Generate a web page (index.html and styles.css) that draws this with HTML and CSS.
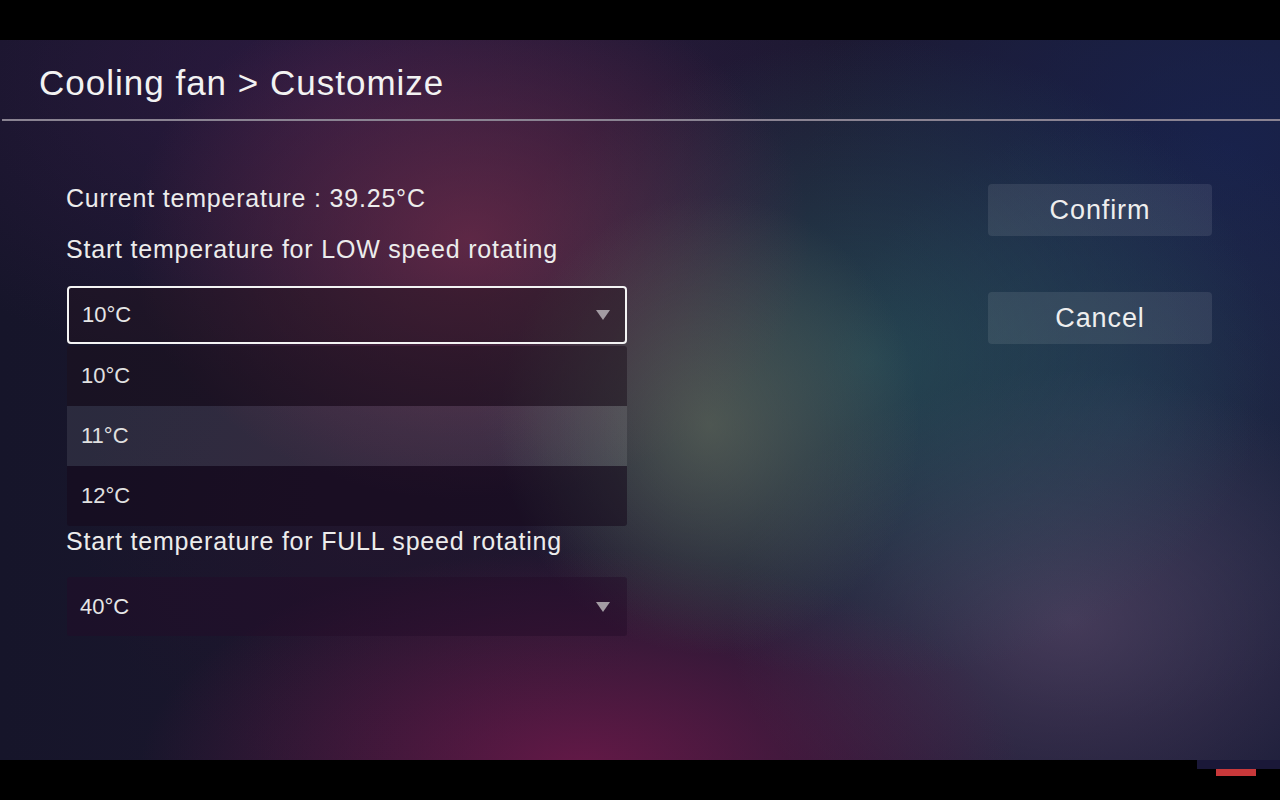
FILE: index.html
```html
<!DOCTYPE html>
<html>
<head>
<meta charset="utf-8">
<link rel="stylesheet" href="styles.css">
</head>
<body>
<div class="frame">
  <div class="screen">
    <header class="header">
      <h1 class="title">Cooling fan &gt; Customize</h1>
    </header>
    <main class="main">
      <section class="form">
        <p class="line current">Current temperature : 39.25°C</p>
        <p class="line label">Start temperature for LOW speed rotating</p>
        <div class="select focused">
          <span>10°C</span>
          <svg class="arrow" width="14" height="10" viewBox="0 0 14 10"><path d="M0 0H14L7 10Z" fill="#a39ca3"/></svg>
        </div>
        <ul class="options">
          <li class="opt">10°C</li>
          <li class="opt hover">11°C</li>
          <li class="opt last">12°C</li>
        </ul>
        <p class="line label label2">Start temperature for FULL speed rotating</p>
        <div class="select plain">
          <span>40°C</span>
          <svg class="arrow" width="14" height="10" viewBox="0 0 14 10"><path d="M0 0H14L7 10Z" fill="#a39ca3"/></svg>
        </div>
      </section>
      <aside class="actions">
        <button class="btn">Confirm</button>
        <button class="btn">Cancel</button>
      </aside>
    </main>
  </div>
  <div class="overlay-tab"></div>
  <div class="overlay-red"></div>
</div>
</body>
</html>
```

FILE: styles.css
```css
* { box-sizing: border-box; }
html, body { margin: 0; padding: 0; background: #000; }
body { font-family: "Liberation Sans", Arial, sans-serif; color: #ececec; }

.frame {
  position: relative;
  width: 1280px;
  height: 800px;
  padding-top: 40px;
  background: #000;
}

.screen {
  width: 1280px;
  height: 720px;
  overflow: hidden;
  background:
    radial-gradient(ellipse 210px 230px at 710px 385px, rgba(105,110,92,0.62), rgba(105,110,92,0) 100%),
    radial-gradient(ellipse 340px 260px at 470px 200px, rgba(118,46,76,0.70), rgba(118,46,76,0) 100%),
    radial-gradient(ellipse 400px 320px at 870px 320px, rgba(42,96,100,0.60), rgba(42,96,100,0) 100%),
    radial-gradient(ellipse 440px 220px at 580px 730px, rgba(112,25,75,0.85), rgba(112,25,75,0) 100%),
    radial-gradient(ellipse 340px 250px at 1070px 580px, rgba(86,70,102,0.70), rgba(86,70,102,0) 100%),
    radial-gradient(ellipse 300px 300px at 1120px 380px, rgba(38,62,88,0.55), rgba(38,62,88,0) 100%),
    radial-gradient(ellipse 420px 320px at 1230px 110px, rgba(24,36,82,0.75), rgba(24,36,82,0) 100%),
    radial-gradient(ellipse 520px 300px at 330px 40px, rgba(58,28,78,0.55), rgba(58,28,78,0) 100%),
    radial-gradient(ellipse 300px 260px at 380px 480px, rgba(40,20,45,0.5), rgba(40,20,45,0) 100%),
    linear-gradient(90deg, #16152a 0%, #1e1830 50%, #1a1c38 100%);
}

.header {
  height: 81px;
  padding-left: 37px;
  display: flex;
  align-items: center;
  border-bottom: 2px solid #8a8392;
  margin-left: 2px;
}
.title {
  margin: 6px 0 0 0;
  font-weight: 400;
  font-size: 35px;
  letter-spacing: 1px;
  color: #f2f2f2;
}

.main {
  display: flex;
  justify-content: space-between;
  padding: 62px 68px 0 66px;
}

.form { width: 561px; }

.line {
  margin: 0;
  font-size: 25px;
  letter-spacing: 0.8px;
  line-height: 30px;
  height: 30px;
  white-space: nowrap;
  color: #ececec;
}
.label { margin-top: 21px; }
.label2 { margin-top: 0; }

.select {
  margin-left: 1px;
  width: 560px;
  height: 58px;
  display: flex;
  align-items: center;
  justify-content: space-between;
  padding: 0 15px 0 13px;
  font-size: 22px;
  color: #e6e6e6;
  border-radius: 4px;
}
.select.focused {
  margin-top: 22px;
  border: 2px solid #f4f4f4;
  background: rgba(35,20,30,0.45);
}
.select.plain {
  margin-top: 21px;
  height: 59px;
  padding-left: 13px;
  padding-right: 17px;
  background: rgba(35,12,40,0.45);
  border-radius: 3px;
}

.options {
  list-style: none;
  margin: 2px 0 0 1px;
  padding: 0;
  width: 560px;
}
.opt {
  height: 60px;
  display: flex;
  align-items: center;
  padding-left: 14px;
  font-size: 22px;
  color: #e0e0e0;
  background: rgba(28,16,28,0.5);
}
.opt:first-child { border-radius: 3px 3px 0 0; }
.opt.hover { background: rgba(255,255,255,0.09); }
.opt.last { background: rgba(22,10,28,0.55); border-radius: 0 0 3px 3px; }

.actions {
  width: 224px;
  display: flex;
  flex-direction: column;
  gap: 56px;
  padding-top: 1px;
}
.btn {
  width: 224px;
  height: 52px;
  border: none;
  border-radius: 4px;
  background: rgba(255,255,255,0.09);
  color: #eeeeee;
  font-family: "Liberation Sans", Arial, sans-serif;
  font-size: 27px;
  letter-spacing: 0.9px;
  padding: 0;
}

.overlay-tab {
  position: absolute;
  left: 1197px;
  top: 760px;
  width: 83px;
  height: 9px;
  background: #1a1838;
}
.overlay-red {
  position: absolute;
  left: 1216px;
  top: 769px;
  width: 40px;
  height: 7px;
  background: #c8383a;
}
```
